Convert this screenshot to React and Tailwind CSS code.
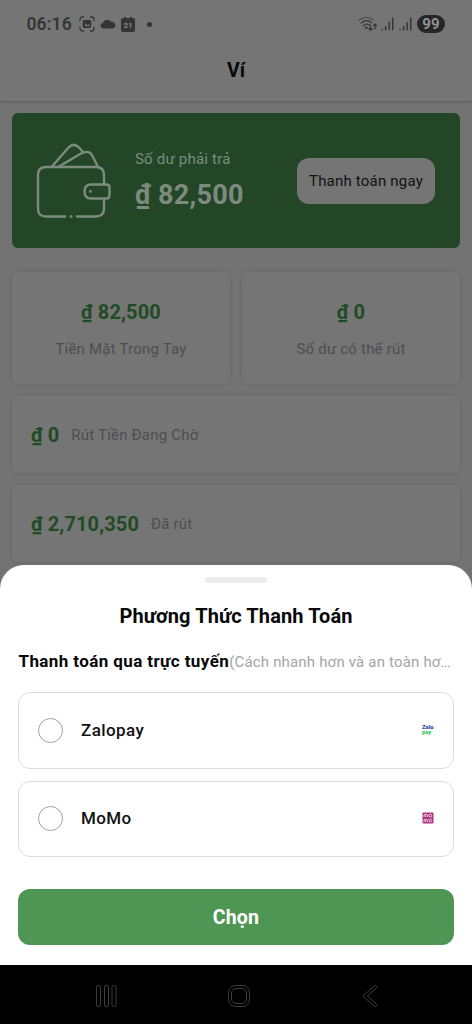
const balances = [
  { amount: '₫ 82,500', label: 'Tiền Mặt Trong Tay' },
  { amount: '₫ 0', label: 'Số dư có thể rút' },
];

const withdrawals = [
  { amount: '₫ 0', label: 'Rút Tiền Đang Chờ' },
  { amount: '₫ 2,710,350', label: 'Đã rút' },
];

function ZalopayLogo() {
  return (
    <div className="w-3 -mt-[2px] text-[6px] leading-[5px] font-black tracking-[-0.1px]">
      <div className="text-[#1f4fae]">Zalo</div>
      <div className="text-[#3fc66b]">pay</div>
    </div>
  );
}

function MomoLogo() {
  return (
    <svg width="12" height="12" viewBox="0 0 12 12" fill="none" className="-mt-px">
      <rect x="0.5" y="0.5" width="11" height="11" rx="1" fill="#a8327c" />
      <g stroke="#f3d3e6" strokeWidth="1">
        <path d="M2 5V3.2Q2 2.3 2.8 2.3T3.7 3.2V5M3.7 3.2Q3.7 2.3 4.5 2.3T5.4 3.2V5" />
        <path d="M2 10V8.2Q2 7.3 2.8 7.3T3.7 8.2V10M3.7 8.2Q3.7 7.3 4.5 7.3T5.4 8.2V10" />
        <circle cx="8.3" cy="3.6" r="1.4" />
        <circle cx="8.3" cy="8.5" r="1.4" />
      </g>
    </svg>
  );
}

const methods = [
  { name: 'Zalopay', logo: <ZalopayLogo /> },
  { name: 'MoMo', logo: <MomoLogo /> },
];

function StatusBar() {
  return (
    <div className="h-12 flex items-center justify-between pl-[26.5px] pr-[27px] text-[#353535]">
      <div className="flex items-center">
        <span className="w-[46px] pt-px text-[17.5px] font-semibold tracking-[0.1px] whitespace-nowrap">06:16</span>
        <svg width="16" height="16" viewBox="0 0 16 16" fill="none" stroke="currentColor" strokeWidth="1.3" className="ml-[6.5px]">
          <path d="M1 5V3.5Q1 1 3.5 1H5M11 1h1.5Q15 1 15 3.5V5M15 11v1.5Q15 15 12.5 15H11M5 15H3.5Q1 15 1 12.5V11" />
          <path d="M5 4h6l1.2 1v6l-1.2 1H5l-1.2-1V5z" fill="currentColor" stroke="none" />
          <path d="M5.2 10.2l2-2.4 1.5 1.5L10 8l1 2.2z" fill="#757575" stroke="none" />
        </svg>
        <svg width="16" height="10" viewBox="0 0 16 10" fill="currentColor" className="ml-[5px]">
          <path d="M3 9.5A2.8 2.8 0 0 1 2.8 4 4.6 4.6 0 0 1 11 2.8 3.5 3.5 0 0 1 13 9.5z" />
        </svg>
        <div className="relative ml-[5px] mt-px w-[14px] h-[14px] rounded-[2px] bg-[#353535] text-[#858585] text-[8px] font-bold leading-[15px] text-center before:absolute before:left-[3px] before:-top-[1px] before:w-[2px] before:h-[2px] before:bg-[#353535] after:absolute after:right-[3px] after:-top-[1px] after:w-[2px] after:h-[2px] after:bg-[#353535]">21</div>
        <span className="ml-[12px] w-[5px] h-[5px] rounded-full bg-[#353535]" />
      </div>
      <div className="flex items-center">
        <svg width="20" height="16" viewBox="0 0 20 16" fill="none" stroke="currentColor" strokeWidth="1.3" strokeLinecap="round">
          <path d="M1 4.2Q8 -1.3 15 4" opacity="0.6" />
          <path d="M3.2 7Q8.5 2.6 13.5 6.6M5.4 9.7Q8.3 7 11.2 9" />
          <circle cx="8.3" cy="11.8" r="0.7" fill="currentColor" />
          <path d="M12.5 9v5M10.7 12.5l1.8 1.8 1.8-1.8M17 13V8M15.4 9.6L17 8l1.6 1.6" strokeWidth="1.2" />
        </svg>
        <Signal className="ml-[3px]" />
        <Signal className="ml-[5px]" />
        <div className="ml-[5px] w-[28px] h-[18px] rounded-full bg-[#262626] text-[#929292] text-[15px] font-bold leading-[18px] text-center tracking-[0.2px]">99</div>
      </div>
    </div>
  );
}

function Signal({ className }) {
  return (
    <svg width="13" height="14" viewBox="0 0 13 14" stroke="currentColor" strokeWidth="1.5" strokeLinecap="round" className={className}>
      <path d="M1 12.5v.3M4.6 9.5v3.3M8.2 5.5v7.3" />
      <path d="M11.7 1.2v11.6" />
    </svg>
  );
}

function WalletIcon() {
  return (
    <svg width="76" height="76" viewBox="0 0 76 76" fill="none" stroke="#7d8b7f" strokeWidth="2.4" strokeLinecap="round" className="shrink-0">
      <path d="M29 73.5H10Q2 73.5 2 65.5V32Q2 24 10 24H60Q68 24 68 32V41.5M68 56V65.5Q68 73.5 60 73.5H41" />
      <path d="M16 23.5L32.5 4.5Q37.5-.5 42.5 4L47.5 9.5M23 23.5L45 10.5Q53.5 6.5 56.5 13L61.5 23" />
      <path d="M55 41.5H70.5Q73.5 41.5 73.5 44.5V52.5Q73.5 55.5 70.5 55.5H55Q48.5 55.5 48.5 48.5T55 41.5Z" />
      <circle cx="54.5" cy="48.5" r="0.7" fill="#7d8b7f" strokeWidth="1.4" />
      <circle cx="35" cy="73.5" r="0.6" strokeWidth="2" />
    </svg>
  );
}

export default function App() {
  return (
    <div className="w-[472px] h-[1024px] flex flex-col overflow-hidden bg-[#737373] font-['Roboto',sans-serif]">
      <div className="h-[565px] flex flex-col overflow-hidden">
        <header className="h-[101px] shrink-0 bg-[#757575] shadow-[0_1px_3px_rgba(0,0,0,0.25)]">
          <StatusBar />
          <h1 className="h-[45px] leading-[45px] text-center text-[19.5px] font-bold text-[#080808]">Ví</h1>
        </header>

        <main className="px-3 pt-3">
          <section className="h-[135px] rounded-[6px] bg-[#234726] flex items-center pl-6 pr-[25px]">
            <WalletIcon />
            <div className="ml-[23px] flex-1 text-[#7d8b7f] whitespace-nowrap">
              <p className="text-[15px] leading-[20px] tracking-[0.2px]">Số dư phải trả</p>
              <p className="mt-[9px] text-[27px] leading-[34px] font-bold tracking-[0.3px]">₫ 82,500</p>
            </div>
            <button className="w-[138px] h-[46px] pt-px rounded-[12px] bg-[#757575] text-[15px] tracking-[0.2px] text-[#111] whitespace-nowrap">
              Thanh toán ngay
            </button>
          </section>

          <div className="mt-6 grid grid-cols-2 gap-3">
            {balances.map((item) => (
              <div key={item.label} className="h-[112px] pt-[27px] rounded-[6px] bg-[#757575] shadow-[0_0_5px_rgba(0,0,0,0.13)] text-center">
                <p className="text-[20px] leading-[26px] font-bold tracking-[0.12px] text-[#1f4c24]">{item.amount}</p>
                <p className="mt-[14px] text-[15px] leading-[20px] tracking-[0.2px] text-[#4e4e4e]">{item.label}</p>
              </div>
            ))}
          </div>

          {withdrawals.map((item) => (
            <div key={item.label} className="mt-3 h-[77px] px-[19px] flex items-center gap-3 rounded-[6px] bg-[#757575] shadow-[0_0_5px_rgba(0,0,0,0.13)]">
              <span className="text-[20px] font-bold tracking-[0.12px] text-[#1f4c24]">{item.amount}</span>
              <span className="pt-[2px] text-[15px] tracking-[0.2px] text-[#4e4e4e]">{item.label}</span>
            </div>
          ))}
        </main>
      </div>

      <section className="h-[400px] shrink-0 px-[18px] rounded-t-[24px] bg-white">
        <div className="mt-[12px] mx-auto w-[62px] h-[6px] rounded-full bg-[#ececec]" />
        <h2 className="mt-[20px] h-[26px] leading-[26px] text-center text-[20px] font-bold tracking-[0.12px] text-[#080808]">Phương Thức Thanh Toán</h2>
        <div className="mt-[22px] h-[22px] flex items-center whitespace-nowrap">
          <span className="pl-[0.5px] text-[17px] font-bold tracking-[0.4px] text-[#080808]">Thanh toán qua trực tuyến</span>
          <span className="text-[15px] tracking-[0.18px] text-[#a5a5a5]">(Cách nhanh hơn và an toàn hơ…</span>
        </div>
        <div className="mt-[19px] flex flex-col gap-3">
          {methods.map((method) => (
            <div key={method.name} className="h-[76.5px] pl-[19px] pr-[19px] flex items-center rounded-[12px] border border-[#dcdcdc]">
              <span className="w-[25px] h-[25px] rounded-full border border-[#a0a0a0]" />
              <span className="ml-[18px] flex-1 text-[17px] font-medium tracking-[0.4px] text-[#111]">{method.name}</span>
              {method.logo}
            </div>
          ))}
        </div>
        <button className="mt-[32px] w-full h-[56px] pt-px rounded-[12px] bg-[#4f9654] text-white text-[19.5px] font-bold tracking-[0.2px]">Chọn</button>
      </section>

      <nav className="h-[59px] shrink-0 bg-black pt-[20px] pl-[95px] pr-[94px] flex justify-between items-start text-[#3c3c3c]">
        <svg width="22" height="23" viewBox="0 0 22 23" fill="none" stroke="currentColor">
          <rect x="1.5" y="0.5" width="4" height="21" rx="1.5" />
          <rect x="9.5" y="0.5" width="4" height="21" rx="1.5" />
          <rect x="17" y="0.5" width="4" height="21" rx="1.5" />
        </svg>
        <svg width="23" height="23" viewBox="0 0 23 23" fill="none" stroke="currentColor" className="-ml-[1px]">
          <rect x="0.5" y="0.5" width="21" height="21" rx="7" />
          <rect x="3.5" y="3.5" width="15" height="15" rx="4.5" />
        </svg>
        <svg width="16" height="23" viewBox="0 0 16 23" fill="none" stroke="currentColor" strokeLinejoin="round">
          <path d="M12.3.9L1 11l11.3 10.4q1.6.7 2.6-.8.2-.9-.5-1.6L5.4 11l9-8q1.2-1-.1-2.2-1-.6-2 .1z" />
        </svg>
      </nav>
    </div>
  );
}
